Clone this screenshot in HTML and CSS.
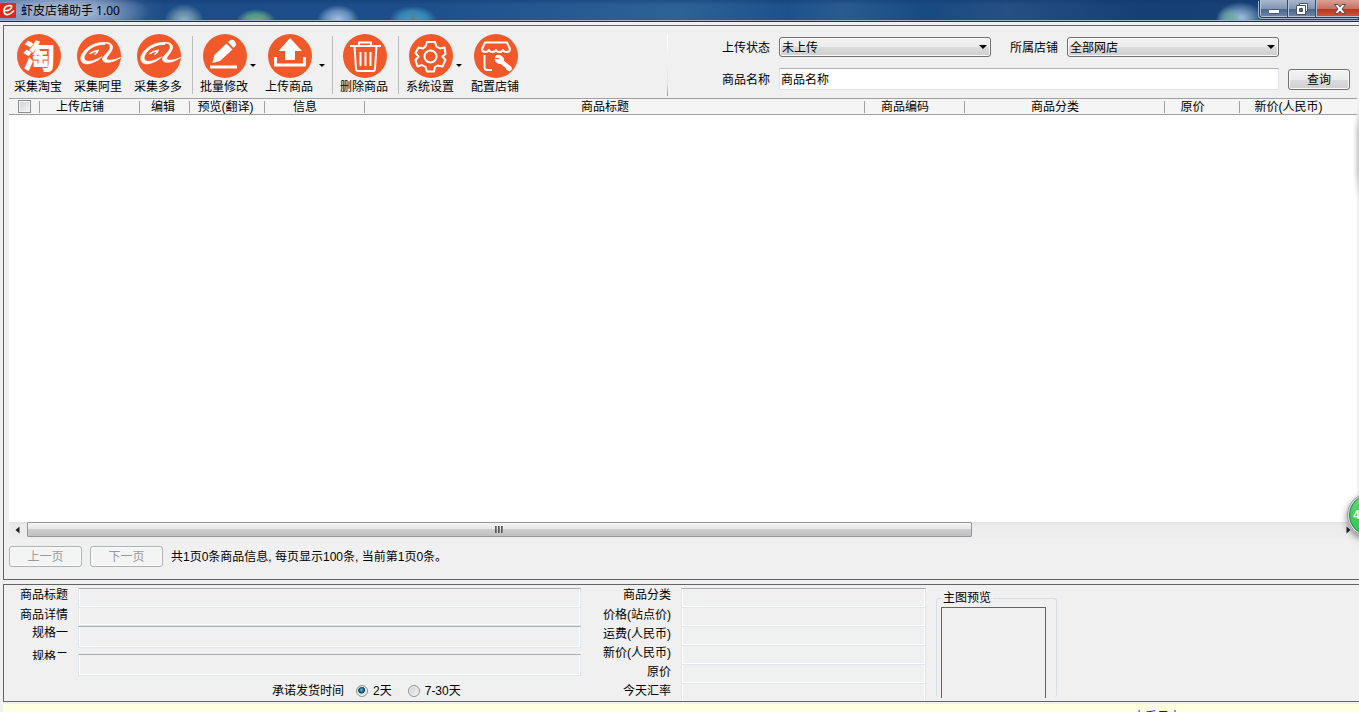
FILE: index.html
```html
<!DOCTYPE html>
<html lang="zh-CN">
<head>
<meta charset="utf-8">
<title>虾皮店铺助手 1.00</title>
<link rel="stylesheet" href="styles.css">
</head>
<body>
<svg class="defs" aria-hidden="true">
  <symbol id="ali" viewBox="0 0 44 44">
    <path d="M28 8.500C18 7.500 7 14 4 22.500C2.500 29 8 32 16 28.500C20 27 23 25 25 22.500C21 24.500 17 27 12.500 27.300C7 27.500 6 24 8.500 20C12 14 20 10 28 10.500Z" fill="#fff" stroke="#fff" stroke-width=".6"/>
    <path d="M24 9.500C30 8 34.500 10 33 14.500C31.500 18.500 25.500 22 25.500 25.500C26.500 30 36 29 43.500 23.500C37 26.500 30.500 27 29.500 25C29.500 22 35.500 18 35.500 13C35 8 28 7.500 24 9.500Z" fill="#fff" stroke="#fff" stroke-width=".8"/>
    <path d="M12.500 20C15 18 18 17 21 16.500C20.500 18.500 19.500 19.500 17.500 20.500" fill="none" stroke="#fff" stroke-width="1.500"/>
  </symbol>
</svg>

<header class="titlebar">
  <svg class="app-icon" viewBox="0 0 16 16" aria-hidden="true"><rect y="1" width="16" height="15" rx="1" fill="#dc2b1b"/><path d="M3 8.500Q8 9.500 11 6.500Q13 3.500 9.500 3.500Q4 4 4 9Q4 13 8 12.500Q11 12 14 8.500" fill="none" stroke="#fff" stroke-width="1.700"/></svg>
  <h1 class="app-title">虾皮店铺助手 1.00</h1>
  <div class="window-buttons">
    <button class="win-btn" aria-label="最小化"><svg width="14" height="14" viewBox="0 0 14 14"><rect x="1.500" y="7.500" width="11" height="4" rx="1" fill="#fff" stroke="#4b5262"/></svg></button>
    <button class="win-btn" aria-label="还原"><svg width="14" height="14" viewBox="0 0 14 14"><path d="M4.500 1.500H12.500V9.500H10.500V3.500H4.500Z" fill="#fff" stroke="#4b5262"/><path fill-rule="evenodd" d="M1.500 3.500H10.500V12.500H1.500ZM4.500 6.500V9.500H7.500V6.500Z" fill="#fff" stroke="#4b5262"/></svg></button>
    <button class="win-btn win-close" aria-label="关闭"><svg width="14" height="14" viewBox="0 0 14 14"><path d="M1.500 2.500H5L7 5L9 2.500H12.500L9 7L12.500 11.500H9L7 9L5 11.500H1.500L5 7Z" fill="#fff" stroke="#5a4450"/></svg></button>
  </div>
</header>

<main class="workspace">
  <section class="frame listing">
    <div class="topbar">
      <nav class="toolbar">
        <div class="group group-source">
          <button class="tool"><span class="disc disc-char">淘</span>采集淘宝</button>
          <button class="tool"><svg class="disc" aria-hidden="true"><use href="#ali"/></svg>采集阿里</button>
          <button class="tool"><svg class="disc" aria-hidden="true"><use href="#ali"/></svg>采集多多</button>
        </div>
        <div class="group group-edit">
          <button class="tool"><svg class="disc" viewBox="0 0 44 44" aria-hidden="true"><path d="M9.500 28L11.500 21L23.500 9.500L29.500 15.500L17 27L9.500 29Z M25 8L27.500 6Q29.500 5 31.500 7L32.500 8.500Q34 10.500 32.500 12L30.500 14Z" fill="#fff"/><path d="M7 33H34" stroke="#fff" stroke-width="3"/></svg>批量修改</button>
          <button class="caret" aria-label="批量修改菜单"></button>
          <button class="tool"><svg class="disc" viewBox="0 0 44 44" aria-hidden="true"><path d="M22 4L34 17H27V26H17V17H10.500Z" fill="#fff"/><path d="M7.500 23V31H36.500V23" fill="none" stroke="#fff" stroke-width="3"/></svg>上传商品</button>
          <button class="caret caret-wide" aria-label="上传商品菜单"></button>
        </div>
        <div class="group group-delete">
          <button class="tool"><svg class="disc" viewBox="0 0 44 44" aria-hidden="true"><g fill="none" stroke="#fff" stroke-width="2"><path d="M7 12H38M16 12V8.500H28V12M11.500 12L13 35Q13.200 37 15 37H30Q31.800 37 32 35L33.500 12M17.500 18V32M22.500 18V32M27.500 18V32"/></g></svg>删除商品</button>
        </div>
        <div class="group">
          <button class="tool"><svg class="disc" viewBox="0 0 44 44" aria-hidden="true"><g fill="none" stroke="#fff" stroke-width="2" stroke-linejoin="round"><path d="M18 8H26L27.500 12.500L31 14.500L35.500 13.500L36.500 20L33.500 22.500L36.500 26L33.500 32.500L28.500 31.500L26 33L25 37.500H18L16.500 33L13 31L8.500 32.500L6.500 26L9.500 22.500L6.500 19L9.500 13.500L14 14.500L16.500 12.500Z"/><circle cx="21.500" cy="22.500" r="6"/></g></svg>系统设置</button>
          <button class="caret" aria-label="系统设置菜单"></button>
          <button class="tool"><svg class="disc" viewBox="0 0 44 44" aria-hidden="true"><g fill="none" stroke="#fff" stroke-width="2" stroke-linejoin="round"><path d="M11 8.500H33L36 15Q36 18 32.500 18Q29.500 18 29 16Q28 18 25.500 18Q22.500 18 22 16Q21 18 18.500 18Q15.500 18 15 16Q14 18 11.500 18Q8 18 8 15ZM10.500 21V33Q10.500 36 13 36H18"/></g><path d="M21 23Q22 20.500 26 21.500Q30 23 29.500 27L37 33Q38.500 36 35.500 37Q33.500 37 32 34L27 29.500Q22 30 21 25L25 26L26 24Z" fill="#fff" stroke="#fff"/></svg>配置店铺</button>
        </div>
      </nav>
      <form class="filters">
        <label for="status">上传状态</label>
        <span class="combo"><select id="status"><option>未上传</option></select></span>
        <label for="shop" class="label-shop">所属店铺</label>
        <span class="combo combo-shop"><select id="shop"><option>全部网店</option></select></span>
        <label for="name">商品名称</label>
        <input id="name" class="name-input" type="text" value="商品名称">
        <button type="button" class="btn">查询</button>
      </form>
    </div>

    <div class="grid-view">
      <table class="goods">
        <colgroup><col class="w30"><col class="w100"><col class="w50"><col class="w75"><col class="w100"><col class="w500"><col class="w100"><col class="w200"><col class="w75"><col></colgroup>
        <thead><tr>
          <th class="tight"><input type="checkbox" class="check" aria-label="全选"></th>
          <th>上传店铺</th><th class="tight">编辑</th><th class="tight">预览(翻译)</th><th>信息</th><th>商品标题</th><th>商品编码</th><th>商品分类</th><th>原价</th><th>新价(人民币)</th>
        </tr></thead>
      </table>
    </div>
    <div class="scrollbar">
      <button class="scroll-arrow" aria-label="向左滚动"><svg width="5" height="8" viewBox="0 0 5 8"><path d="M4.500 0.500V7.500L0.500 4Z" fill="#222"/></svg></button>
      <div class="track"><div class="thumb"><i></i><i></i><i></i></div></div>
      <button class="scroll-arrow scroll-right" aria-label="向右滚动"><svg width="5" height="8" viewBox="0 0 5 8"><path d="M0.500 0.500V7.500L4.500 4Z" fill="#222"/></svg></button>
    </div>
    <div class="pager">
      <button class="btn page-btn" disabled>上一页</button>
      <button class="btn page-btn" disabled>下一页</button>
      <span>共1页0条商品信息, 每页显示100条, 当前第1页0条。</span>
    </div>
  </section>

  <section class="frame detail">
    <div class="form-main">
      <div class="row"><label for="f1">商品标题</label><input id="f1" class="field lined" readonly></div>
      <div class="row row-low"><label for="f2">商品详情</label><input id="f2" class="field" readonly></div>
      <div class="row row-tall"><label for="f3">规格一</label><input id="f3" class="field lined" readonly></div>
      <div class="row row-cut"><label for="f4">规格二</label><input id="f4" class="field lined" readonly></div>
      <div class="ship">
        <span>承诺发货时间</span>
        <label class="option"><input type="radio" name="ship" checked>2天</label>
        <label class="option"><input type="radio" name="ship">7-30天</label>
      </div>
    </div>
    <div class="form-side">
      <label for="s1">商品分类</label><input id="s1" class="field lined" readonly>
      <label for="s2">价格(站点价)</label><input id="s2" class="field" readonly>
      <label for="s3">运费(人民币)</label><input id="s3" class="field" readonly>
      <label for="s4">新价(人民币)</label><input id="s4" class="field" readonly>
      <label for="s5">原价</label><input id="s5" class="field" readonly>
      <label for="s6">今天汇率</label><input id="s6" class="field" readonly>
    </div>
    <fieldset class="preview"><legend>主图预览</legend><div class="picture"></div></fieldset>
  </section>

  <footer class="status"><a href="#log">查看日志</a></footer>
</main>
<div class="edge-shadow"></div>
<div class="bubble">4</div>
</body>
</html>
```

FILE: styles.css
```css
* { box-sizing: border-box; }
body {
  margin: 0;
  height: 100vh;
  overflow: hidden;
  position: relative;
  display: flex;
  flex-direction: column;
  background: #f0f0f0;
  color: #000;
  font: 12px/14px "Liberation Sans", "Noto Sans CJK SC", sans-serif;
}
button, input, select { font: inherit; color: inherit; margin: 0; }
button { padding: 0; border: 0; background: none; }
.defs { position: absolute; width: 0; height: 0; }

/* title bar */
.titlebar {
  flex: none;
  height: 22px;
  display: flex;
  align-items: flex-start;
  border-bottom: 1px solid #1c2f4c;
  box-shadow: inset 0 -1px #9db4d0;
  background:
    radial-gradient(ellipse 85px 24px at 65px 12px, #a9b9d4 20%, #8ea5c8aa 60%, transparent),
    radial-gradient(ellipse 20px 16px at 184px 20px, #8fb0bc, #8fb0bc99 50%, transparent),
    radial-gradient(ellipse 20px 13px at 256px 22px, #6cb788, #6cb788aa 60%, transparent),
    radial-gradient(ellipse 21px 15px at 338px 20px, #a6c3e7, #a6c3e788 60%, transparent),
    radial-gradient(ellipse 5px 12px at 413px 20px, #527d8d, transparent),
    radial-gradient(ellipse 24px 14px at 413px 20px, #419fcb, #419fcbaa 60%, transparent),
    radial-gradient(ellipse 14px 14px at 1230px 21px, #6fae9f, #6fae9f99 50%, transparent),
    radial-gradient(ellipse 24px 16px at 1240px 18px, #a8c8ea, #a8c8ea88 50%, transparent),
    linear-gradient(#0c346b66, transparent 5px),
    linear-gradient(90deg, #8199c0 0, #1d4c88 12%, #1d4e8b 30%, #2d6296 50%, #1c528c 58%, #2a5b90 62%, #174b82 68%, #264f84 74%, #153f75 84%, #1c4377);
}
.app-icon { width: 16px; height: 16px; margin-top: 2px; }
.app-title { flex: 1; margin: 3px 0 0 5px; font: 12px/16px "Noto Sans", "Noto Sans CJK SC", sans-serif; }
.window-buttons {
  display: flex;
  height: 18px;
  border: 1px solid #263b5a;
  border-width: 0 0 1px 1px;
  border-radius: 0 0 0 4px;
  box-shadow: -1px 1px #a0b4ce;
  overflow: hidden;
}
.win-btn {
  width: 28px;
  display: grid;
  place-items: center;
  border-right: 1px solid #33486a;
  background: linear-gradient(#a9b7cb, #8097b5 50%, #486389 51%, #7187a8);
  box-shadow: inset 1px -1px #b4c3d7;
}
.win-close { width: 43px; border: 0; background: linear-gradient(#dba095, #ca705f 50%, #b5331c 51%, #cf583c); padding-left: 4px; }

/* frames */
.workspace { flex: 1; min-height: 0; display: flex; flex-direction: column; padding: 3px 0 0 3px; }
.frame { border: 1px solid #646464; border-right: 0; }
.listing { flex: 1; min-height: 0; display: flex; flex-direction: column; padding: 0 2px 12px 5px; margin-bottom: 4px; }

/* toolbar */
.topbar { display: flex; height: 72px; flex: none; }
.toolbar { display: flex; width: 659px; flex: none; padding: 8px 0 2px 5px; background: linear-gradient(#fff, #e4e4e4 80%, #999) right 8px / 1px 62px no-repeat; }
.group { display: flex; }
.group + .group { background: linear-gradient(#bbb, #bbb) 0 2px / 1px 58px no-repeat; padding-left: 8px; }
.group-source { gap: 12px; margin-right: 10px; }
.group-edit { margin-right: 2px; }
.group-delete { margin-right: 10px; }
.tool { width: 48px; display: flex; flex-direction: column; align-items: center; gap: 2px; white-space: nowrap; }
.disc { display: block; width: 44px; height: 44px; margin-left: 2px; border-radius: 50%; background: #f1592a; }
.disc-char { color: #fff; font: 900 32px/41px "Noto Sans CJK SC", sans-serif; text-align: center; }
.caret { width: 10px; margin-right: 7px; display: grid; place-items: center; }
.caret-wide { width: 17px; margin: 0; }
.caret::before, .combo::after { content: ""; border: solid transparent; border-width: 3px 3px 0; border-top-color: #000; }

/* filters */
.filters {
  flex: 1;
  display: grid;
  grid-template-columns: 48px 1fr 58px 1fr 62px;
  grid-template-rows: 20px 22px;
  gap: 11px 9px;
  align-items: center;
  padding: 11px 7px 0 54px;
}
.filters label { padding-top: 2px; }
.filters .label-shop { padding-left: 10px; }
.combo { position: relative; display: grid; }
.combo::after { position: absolute; right: 4px; top: 8px; border-width: 4px 4px 0; pointer-events: none; }
.combo select { width: 100%; height: 20px; padding: 1px 2px 0; appearance: none; }
.combo select, .btn {
  border: 1px solid #707070;
  border-radius: 3px;
  background: linear-gradient(#f3f3f3, #ebebeb 50%, #dcdcdc 51%, #cfcfcf);
  box-shadow: inset 0 0 0 1px #fafafa;
}
.filters label:nth-of-type(3) { grid-column: 1; }
.name-input { grid-column: 2 / span 3; width: 100%; height: 22px; padding: 0 1px 2px; border: 1px solid #e2e3ea; border-top-color: #abadb3; background: #fff; }
.btn { height: 21px; padding-top: 1px; }

/* goods table */
.grid-view { flex: 1; min-height: 0; background: #fff; }
.goods { width: 100%; table-layout: fixed; border-collapse: collapse; border: solid #a0a0a0; border-width: 1px 0; background: #f5f5f5; }
.goods th { height: 16px; padding: 1px 20px 0 0; font-weight: 400; line-height: 14px; white-space: nowrap; background: linear-gradient(#a0a0a0, #a0a0a0) right 2px / 1px 12px no-repeat; }
.goods th:last-child { background: none; }
.goods .tight { padding-right: 4px; }
.w30 { width: 31px; } .w50 { width: 50px; } .w75 { width: 75px; }
.w100 { width: 100px; } .w200 { width: 200px; } .w500 { width: 500px; }
.goods .check { appearance: none; display: block; width: 13px; height: 13px; margin: 0 auto; border: 1px solid #8e8f8f; background: linear-gradient(135deg, #cdd0d5, #f6f6f6); box-shadow: inset 0 0 0 1px #f4f4f4; }
.goods th:first-child { padding: 0; }

.scrollbar { flex: none; height: 17px; display: flex; background: linear-gradient(#e0e0e0, #ebebeb 3px, #eee); }
.scroll-arrow { width: 18px; padding: 0 2px 2px 0; display: grid; place-items: center; }
.scroll-right { padding-right: 0; }
.track { flex: 1; padding: 0 0 2px; }
.thumb { width: 72%; height: 15px; display: flex; justify-content: center; align-items: center; gap: 1px; border: 1px solid #979797; border-radius: 1px; background: linear-gradient(#f5f5f5, #e6e6e6 45%, #cfcfcf 46%, #c0c0c3); }
.thumb i { width: 2px; height: 7px; background: linear-gradient(90deg, #444, #999); }

.pager { display: flex; align-items: center; gap: 8px; padding-top: 7px; }
.page-btn { width: 73px; padding-top: 0; color: #9a9a9a; border-color: #adb2b5; background: #f4f4f4; }

/* detail panel */
.detail { flex: none; height: 118px; display: flex; align-items: flex-start; padding: 3px 0 0; overflow: hidden; line-height: 14px; }
.form-main { width: 577px; padding-left: 16px; }
.row { display: flex; gap: 10px; height: 20px; }
.row label { width: 48px; text-align: right; }
.row-low { height: 18px; }
.row-tall { height: 22px; }
.row-cut { height: 28px; padding-top: 2px; }
.row-cut label { height: 10px; overflow: hidden; }
.row-cut .field { margin-top: 4px; }
.field { flex: 1; min-width: 0; border: 1px solid #e1e5ec; border-top-width: 0; background: #f0f0f0; box-shadow: inset 1px -1px #fff, inset -1px 0 #fff; padding: 0 2px; }
.field.lined { border-top: 1px solid #abadb3; }
.ship { display: flex; gap: 16px; padding: 7px 0 0 252px; align-items: center; }
.ship > span { margin-right: -4px; }
.option { display: flex; align-items: center; gap: 5px; padding-top: 1px; }
.option input { appearance: none; width: 12px; height: 12px; border: 1px solid #8e8f8f; border-radius: 50%; background: linear-gradient(135deg, #c8ccd2, #f6f6f6); box-shadow: inset 0 0 0 1px #f4f4f4; }
.option input:checked { background: radial-gradient(circle at 45% 40%, #5cc4ee, #12587e 30%, #12304c 38%, #dde3e8 48%); }
.form-side { display: grid; grid-template-columns: 72px 245px; grid-template-rows: 20px repeat(5, 19px); column-gap: 10px; margin-left: 18px; text-align: right; }
.form-side label { white-space: nowrap; }
.form-side .field { width: 100%; }
.preview { width: 121px; height: 107px; margin: 2px 0 0 10px; padding: 1px 10px 0 4px; border: 1px solid #d5dfe5; border-bottom: 0; border-radius: 3px; }
.preview legend { padding: 0 2px; line-height: 16px; }
.picture { height: 91px; border: 1px solid #646464; border-bottom: 0; }

.status { flex: none; height: 8px; margin-top: 2px; overflow: hidden; background: #ffffe1; padding: 6px 178px 0 0; text-align: right; }
.status a { display: block; color: #00f; text-decoration: none; }

.edge-shadow { position: absolute; right: 0; top: 108px; width: 6px; height: 92px; background: linear-gradient(90deg, transparent, #ccc); mask-image: linear-gradient(transparent, #000 25%, #000 70%, transparent); }
.bubble { position: absolute; right: -32px; top: 493px; width: 44px; height: 44px; padding-left: 4px; border: 2px solid #ddd; border-radius: 50%; outline: 1px solid #999; outline-offset: -1px; background: linear-gradient(#7bd98a, #3fc95c 50%); box-shadow: inset 0 0 0 1px #1c8a50, 0 3px 7px #0007; color: #fff; font-weight: 700; line-height: 40px; }
```
